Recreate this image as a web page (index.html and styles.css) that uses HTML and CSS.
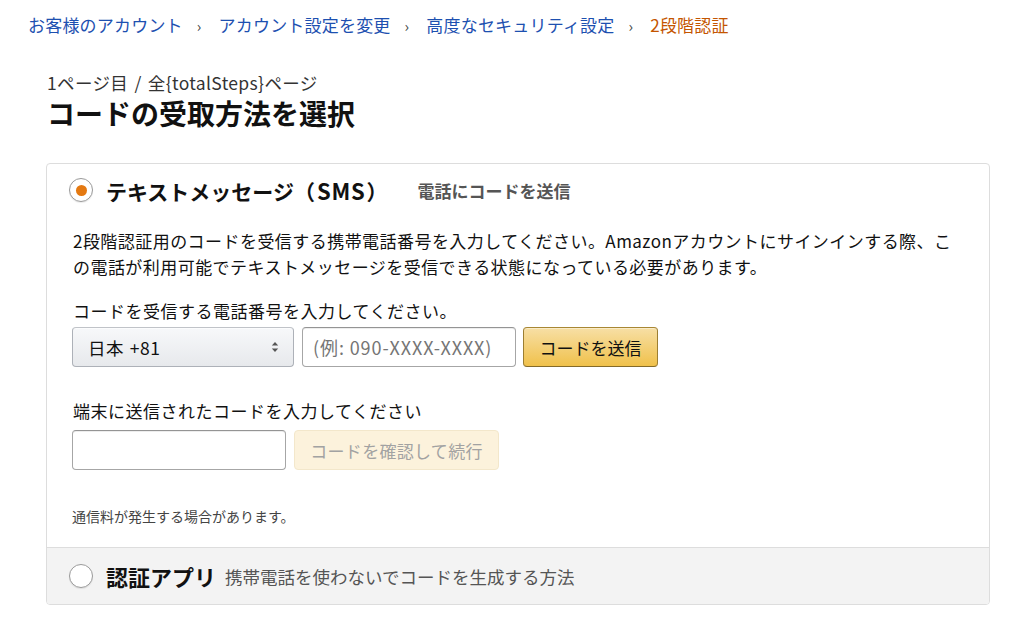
FILE: index.html
```html
<!DOCTYPE html>
<html lang="ja">
<head>
<meta charset="utf-8">
<title>2段階認証</title>
<link rel="stylesheet" href="styles.css">
</head>
<body>
<nav class="crumbs">
  <a class="crumb">お客様のアカウント</a><span class="sep">›</span>
  <a class="crumb">アカウント設定を変更</a><span class="sep">›</span>
  <a class="crumb">高度なセキュリティ設定</a><span class="sep">›</span>
  <span class="crumb current">2段階認証</span>
</nav>
<main class="page">
  <div class="step">1ページ目 / 全{totalSteps}ページ</div>
  <h1 class="title">コードの受取方法を選択</h1>
  <div class="box">
    <section class="opt opt-active">
      <div class="opt-head">
        <span class="radio checked"><span class="dot"></span></span>
        <span class="opt-name">テキストメッセージ（<span class="latin">SMS</span>）</span>
        <span class="opt-sub">電話にコードを送信</span>
      </div>
      <div class="opt-body">
        <p class="desc">2段階認証用のコードを受信する携帯電話番号を入力してください。Amazonアカウントにサインインする際、この電話が利用可能でテキストメッセージを受信できる状態になっている必要があります。</p>
        <div class="label first">コードを受信する電話番号を入力してください。</div>
        <div class="row">
          <div class="select">
            <span class="sel-text">日本 +81</span>
            <svg class="arrows" width="8" height="12" viewBox="0 0 8 12"><path d="M4 1 L7.2 4.6 L0.8 4.6 Z M4 11 L7.2 7.4 L0.8 7.4 Z" fill="#555"/></svg>
          </div>
          <div class="input phone"><span class="ph">(例: 090-XXXX-XXXX)</span></div>
          <button class="btn primary">コードを送信</button>
        </div>
        <div class="label second">端末に送信されたコードを入力してください</div>
        <div class="row">
          <div class="input code"></div>
          <button class="btn disabled">コードを確認して続行</button>
        </div>
        <p class="note">通信料が発生する場合があります。</p>
      </div>
    </section>
    <section class="opt opt-alt">
      <div class="opt-head alt">
        <span class="radio"></span>
        <span class="opt-name big">認証アプリ</span>
        <span class="opt-sub light">携帯電話を使わないでコードを生成する方法</span>
      </div>
    </section>
  </div>
</main>
</body>
</html>
```

FILE: styles.css
```css
* { box-sizing: border-box; }
html, body { margin: 0; padding: 0; background: #fff; }
body {
  font-family: "Noto Sans CJK JP", "Noto Sans", "Liberation Sans", sans-serif;
  color: #111;
  font-size: 17px;
}
.crumbs {
  padding: 13px 0 0 28px;
  height: 37px;
  line-height: 24px;
  font-size: 17px;
  letter-spacing: 0.2px;
  white-space: nowrap;
}
.crumb { color: #1d50b0; text-decoration: none; }
.crumb.current { color: #c45500; }
.sep { color: #444; font-size: 15px; padding: 0 13px 0 14px; }
.page { padding: 34px 34px 0 46px; }
.step {
  padding-left: 1px;
  line-height: 24px;
  font-size: 17.5px;
  letter-spacing: 0.35px;
  word-spacing: 2px;
  color: #333;
}
.title {
  margin: 1px 0 0 1px;
  font-size: 28px;
  line-height: 34px;
  font-weight: 700;
  color: #111;
}
.box {
  margin-top: 33px;
  border: 1px solid #ddd;
  border-radius: 4px;
  overflow: hidden;
}
.opt-head {
  display: flex;
  align-items: center;
  height: 28px;
  margin-top: 12px;
  padding-left: 22px;
}
.radio {
  width: 24px;
  height: 24px;
  border-radius: 50%;
  border: 1.5px solid #9a9a9a;
  background: #fff;
  display: flex;
  align-items: center;
  justify-content: center;
  flex: none;
  box-shadow: 0 1px 1px rgba(0,0,0,0.08);
}
.dot { width: 11px; height: 11px; border-radius: 50%; background: #e47911; }
.opt-name {
  margin-left: 13px;
  font-size: 21px;
  font-weight: 700;
  color: #111;
  white-space: nowrap;
}
.latin { font-size: 22px; letter-spacing: 0.8px; padding: 0 1px 0 2px; }
.opt-name.big { font-size: 22px; }
.opt-sub {
  margin-left: 30px;
  font-size: 17px;
  font-weight: 700;
  color: #555;
  white-space: nowrap;
}
.opt-sub.light { font-weight: 400; font-size: 17.5px; margin-left: 9px; }
.opt-body { padding: 0 26px 22px 26px; }
.desc {
  margin: 24px 0 0 0;
  line-height: 26px;
  letter-spacing: 0.45px;
}
.label { line-height: 24px; letter-spacing: 0.5px; }
.label.first { margin-top: 19px; }
.label.second { margin-top: 32px; }
.row { display: flex; align-items: stretch; gap: 8px; height: 40px; }
.label.first + .row { margin-top: 4px; }
.label.second + .row { margin-top: 7px; }
.select {
  width: 222px;
  margin-left: -1px;
  border: 1px solid #adb1b8;
  border-top-color: #c0c3c8;
  border-radius: 4px;
  background: linear-gradient(#f7f8fa, #e7e9ec);
  display: flex;
  align-items: center;
  justify-content: space-between;
  padding: 0 14px 0 15px;
  box-shadow: 0 1px 0 rgba(255,255,255,0.6) inset;
}
.sel-text { font-size: 17.5px; letter-spacing: 0.6px; word-spacing: 1px; }
.input {
  border: 1px solid #a6a6a6;
  border-top-color: #949494;
  border-radius: 4px;
  background: #fff;
  box-shadow: 0 1px 0 rgba(255,255,255,0.5), 0 1px 0 rgba(0,0,0,0.07) inset;
  display: flex;
  align-items: center;
}
.input.phone { width: 214px; padding-left: 10px; }
.input.code { width: 214px; margin-left: -1px; }
.ph { color: #757575; font-size: 18px; letter-spacing: 0.9px; white-space: nowrap; }
.btn {
  font-family: inherit;
  font-size: 17px;
  border-radius: 4px;
  padding: 0;
  margin: 0;
}
.btn.primary {
  width: 135px;
  margin-left: -1px;
  color: #111;
  border: 1px solid;
  border-color: #a88734 #9c7e31 #846a29;
  background: linear-gradient(#f7dfa5, #f0c14b);
  box-shadow: 0 1px 0 rgba(255,255,255,0.4) inset;
}
.btn.disabled {
  width: 205px;
  color: #a2a2a2;
  border: 1px solid #f3e7cb;
  background: #fcf2dc;
  letter-spacing: 0.3px;
}
.note {
  margin: 37px 0 0 -1px;
  font-size: 14px;
  line-height: 18px;
  color: #444;
}
.opt-alt {
  border-top: 1px solid #ddd;
  background: #f3f3f3;
  height: 57px;
}
.opt-head.alt { margin-top: 14px; }
```
